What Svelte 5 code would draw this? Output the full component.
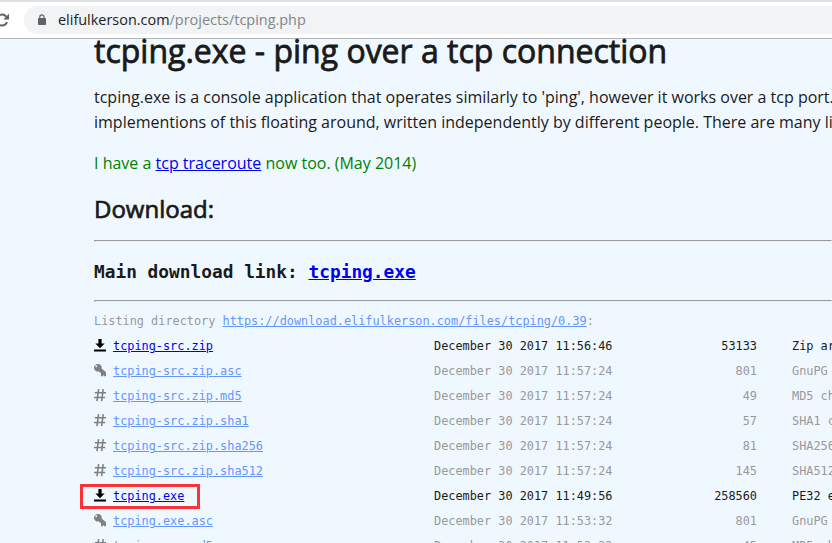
<script lang="ts">
  const listing = "https://download.elifulkerson.com/files/tcping/0.39";

  const files = [
    { icon: "download", name: "tcping-src.zip", time: "11:56:46", size: 53133, type: "Zip archive data" },
    { icon: "key", name: "tcping-src.zip.asc", time: "11:57:24", size: 801, type: "GnuPG signature" },
    { icon: "hash", name: "tcping-src.zip.md5", time: "11:57:24", size: 49, type: "MD5 checksum" },
    { icon: "hash", name: "tcping-src.zip.sha1", time: "11:57:24", size: 57, type: "SHA1 checksum" },
    { icon: "hash", name: "tcping-src.zip.sha256", time: "11:57:24", size: 81, type: "SHA256 checksum" },
    { icon: "hash", name: "tcping-src.zip.sha512", time: "11:57:24", size: 145, type: "SHA512 checksum" },
    { icon: "download", name: "tcping.exe", time: "11:49:56", size: 258560, type: "PE32 executable", marked: true },
    { icon: "key", name: "tcping.exe.asc", time: "11:53:32", size: 801, type: "GnuPG signature" },
    { icon: "hash", name: "tcping.exe.md5", time: "11:53:32", size: 45, type: "MD5 checksum" },
  ];
</script>

<div class="window">
  <header>
    <svg class="reload" width="10" height="16" viewBox="0 0 10 16">
      <path d="M-3.4 8a5.4 5.4 0 0 1 9.6-3.4M7 10.2a5.4 5.4 0 0 1-10 0" fill="none" stroke="#5f6368" stroke-width="2" />
      <path d="M9 1.8v5.7H3.3z" fill="#5f6368" />
    </svg>
    <div class="omnibox">
      <svg width="10" height="12" viewBox="0 0 10 12">
        <path d="M2.8 5V3a2.1 2.1 0 0 1 4.2 0V5" fill="none" stroke="#5f6368" stroke-width="1.2" />
        <rect x="1" y="4" width="8" height="7" rx="0.8" fill="#5f6368" />
      </svg>
      <div class="url">elifulkerson.com<span>/projects/tcping.php</span></div>
    </div>
  </header>

  <main>
    <h1>tcping.exe - ping over a tcp connection</h1>
    <p>
      tcping.exe is a console application that operates similarly to 'ping', however it works over a tcp port.<br />
      implementions of this floating around, written independently by different people. There are many like it
    </p>
    <p class="news">I have a <a href="#traceroute">tcp traceroute</a> now too. (May 2014)</p>
    <h2>Download:</h2>
    <hr />
    <h3>Main download link: <a href="#tcping">tcping.exe</a></h3>
    <hr />
    <div class="listing">
      <div class="dir">Listing directory <a href="#dir">{listing}</a>:</div>
      {#each files as file}
        <div class="row" class:main={file.icon === "download"} class:marked={file.marked}>
          <svg width="12" height="14" viewBox="0 0 12 14">
            {#if file.icon === "download"}
              <path d="M4.4 1h3.2v4.6h3L6 10.2 1.4 5.6h3zM0 11.6h12v2H0z" />
            {:else if file.icon === "key"}
              <path
                fill-rule="evenodd"
                d="M4 1a3.8 3.8 0 0 1 3.7 4.4L12 9.3v3.5l-1.6.7-.8-1.4-1.1 1.5-1.6-.6.2-2.9-1-.3L5 8.4A3.8 3.8 0 1 1 4 1zM2.2 2.3a.9.9 0 1 0 .1 0z"
              />
            {:else}
              <path class="hash" d="M4.6 1.2L3 13.2M9.2 1.2L7.6 13.2M.8 4.8h11.2M0 9.5h11.2" />
            {/if}
          </svg>
          <div><a href="#{file.name}">{file.name}</a></div>
          <div>December 30 2017 {file.time}</div>
          <div class="size">{file.size}</div>
          <div class="type">{file.type}</div>
        </div>
      {/each}
    </div>
  </main>
</div>

<style>
  :global(body) {
    margin: 0;
    overflow: hidden;
  }

  .window {
    width: 832px;
    height: 543px;
    overflow: hidden;
    display: flex;
    flex-direction: column;
    white-space: nowrap;
    background: #f0f8ff;
  }

  header {
    box-sizing: border-box;
    flex: none;
    height: 39px;
    display: flex;
    align-items: center;
    gap: 14px;
    background: #fff;
    border-top: 2px solid #dee1e6;
    border-bottom: 1px solid #b4b4b6;
  }

  .reload {
    flex: none;
  }

  .omnibox {
    flex: 1;
    height: 28px;
    display: flex;
    align-items: center;
    padding-left: 13px;
    gap: 11px;
    background: #f1f3f4;
    border-radius: 14px 0 0 14px;
  }

  .url {
    font-family: "Open Sans", sans-serif;
    font-size: 14.45px;
    line-height: 28px;
    color: #202124;
  }

  .url span {
    color: #80868b;
  }

  main {
    flex: none;
    padding-left: 94px;
    font-family: "Open Sans", sans-serif;
    font-size: 16px;
    color: #1a1a1a;
  }

  h1 {
    margin: 0 0 22px;
    font-size: 32px;
    font-weight: 400;
    line-height: 24px;
    -webkit-text-stroke: 0.8px #1a1a1a;
  }

  h2 {
    margin: 0 0 13px;
    font-size: 24px;
    font-weight: 400;
    line-height: 36px;
    -webkit-text-stroke: 0.7px #1a1a1a;
  }

  h3 {
    height: 58px;
    margin: 0;
    font-family: "DejaVu Sans Mono", monospace;
    font-size: 17.82px;
    line-height: 59px;
  }

  p {
    margin: 0 0 16px;
    line-height: 25px;
  }

  a {
    color: #0000ee;
  }

  .news {
    margin-bottom: 15px;
    color: #008000;
  }

  hr {
    margin: 0;
    border: 1px solid #9a9a9a;
    border-right-color: #eee;
    border-bottom-color: #eee;
  }

  .listing {
    padding-top: 7px;
    font-family: "DejaVu Sans Mono", monospace;
    font-size: 11.873px;
    line-height: 25px;
    color: #999;
  }

  .listing a {
    color: #6495ff;
  }

  .row {
    position: relative;
    display: grid;
    grid-template-columns: 19px 321px 223px 100px 1fr;
    align-items: center;
    height: 25px;
  }

  .row svg {
    align-self: start;
    margin-top: 4px;
    fill: #808080;
  }

  .row .hash {
    fill: none;
    stroke: #808080;
    stroke-width: 1.6;
  }

  .row.main {
    color: #1a1a1a;
  }

  .row.main svg {
    fill: #000;
  }

  .row.main a {
    color: #0000ee;
  }

  .size {
    text-align: right;
  }

  .type {
    padding-left: 35px;
    overflow: hidden;
  }

  .marked::after {
    content: "";
    position: absolute;
    box-sizing: border-box;
    left: -14px;
    top: 0;
    width: 120px;
    height: 25px;
    border: 3px solid #fb3237;
  }
</style>
